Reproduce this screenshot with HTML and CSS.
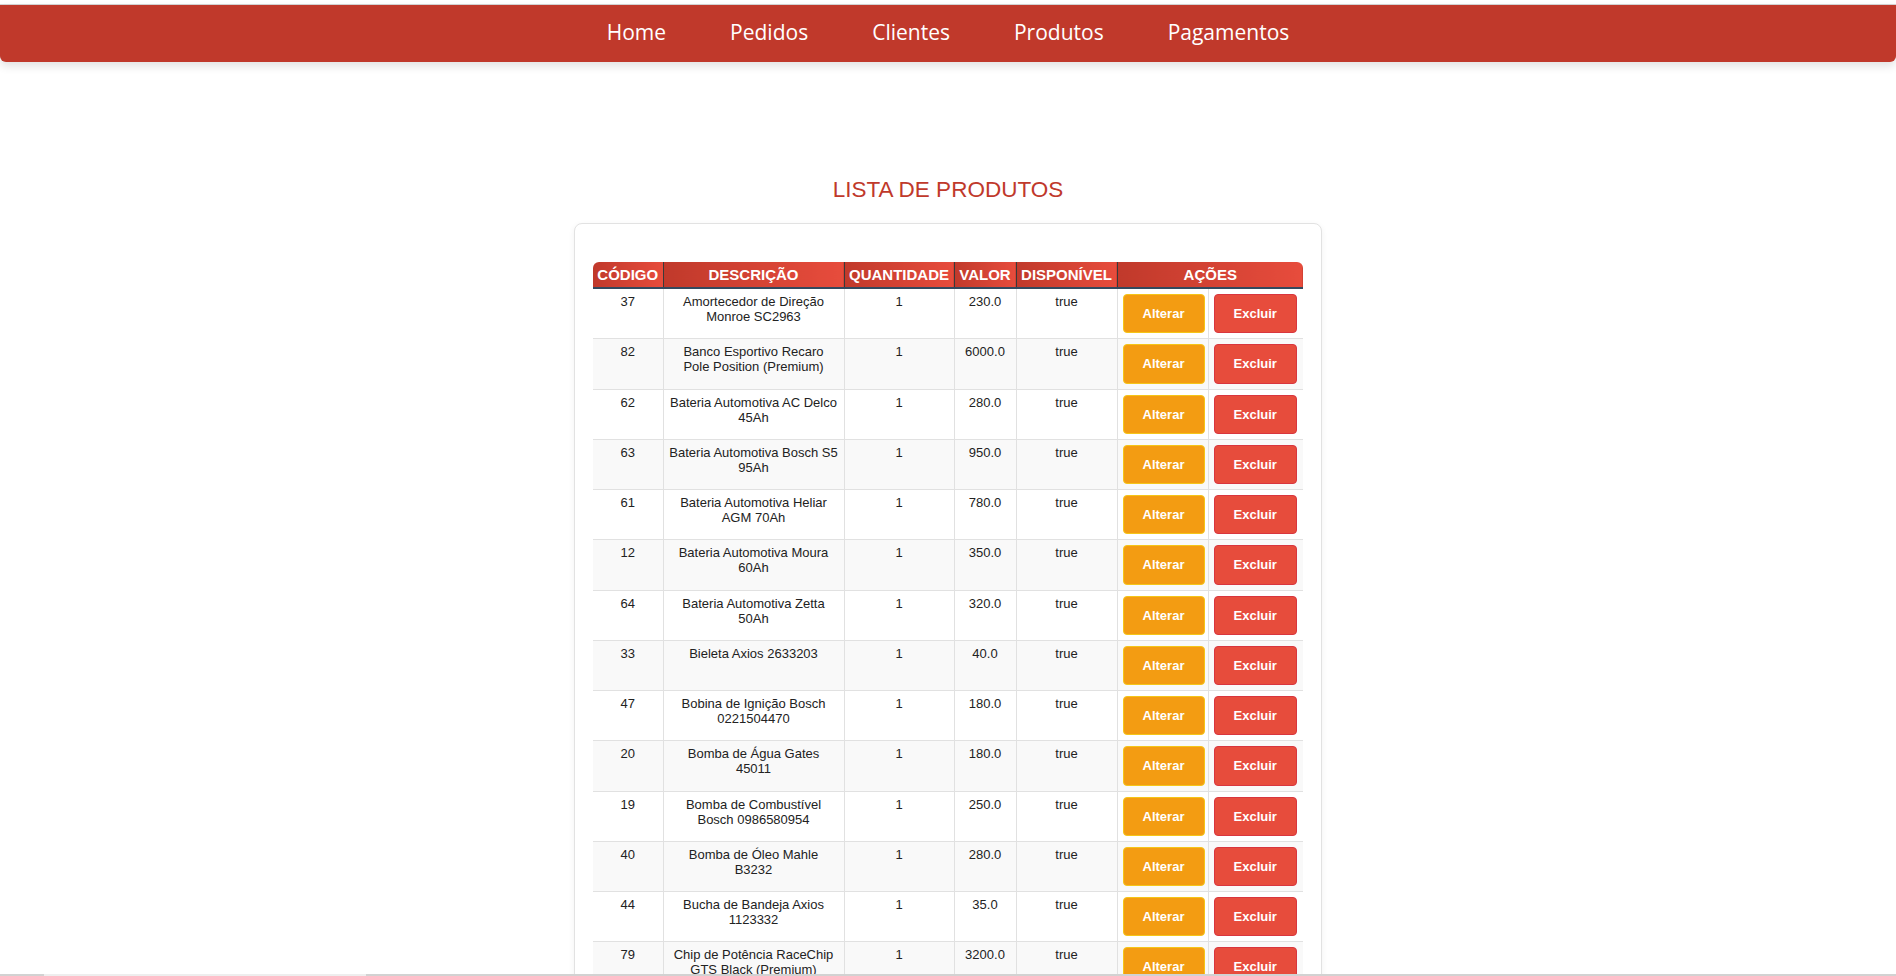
FILE: index.html
```html
<!DOCTYPE html>
<html lang="pt-BR">
<head>
<meta charset="utf-8">
<title>Lista de Produtos</title>
<link rel="stylesheet" href="styles.css">
</head>
<body>
<nav class="navbar">
  <a class="nav-link" href="#">Home</a>
  <a class="nav-link" href="#">Pedidos</a>
  <a class="nav-link" href="#">Clientes</a>
  <a class="nav-link" href="#">Produtos</a>
  <a class="nav-link" href="#">Pagamentos</a>
</nav>
<main class="page">
  <h2 class="title">LISTA DE PRODUTOS</h2>
  <section class="card">
    <table class="products">
      <colgroup>
        <col class="c-code"><col class="c-desc"><col class="c-qty"><col class="c-val"><col class="c-disp"><col class="c-act1"><col class="c-act2">
      </colgroup>
      <thead>
        <tr><th>CÓDIGO</th><th>DESCRIÇÃO</th><th>QUANTIDADE</th><th>VALOR</th><th>DISPONÍVEL</th><th colspan="2">AÇÕES</th></tr>
      </thead>
      <tbody>
        <tr><td>37</td><td>Amortecedor de Direção Monroe SC2963</td><td>1</td><td>230.0</td><td>true</td><td><button class="btn btn-edit">Alterar</button></td><td><button class="btn btn-del">Excluir</button></td></tr>
        <tr><td>82</td><td>Banco Esportivo Recaro Pole Position (Premium)</td><td>1</td><td>6000.0</td><td>true</td><td><button class="btn btn-edit">Alterar</button></td><td><button class="btn btn-del">Excluir</button></td></tr>
        <tr><td>62</td><td>Bateria Automotiva AC Delco 45Ah</td><td>1</td><td>280.0</td><td>true</td><td><button class="btn btn-edit">Alterar</button></td><td><button class="btn btn-del">Excluir</button></td></tr>
        <tr><td>63</td><td>Bateria Automotiva Bosch S5 95Ah</td><td>1</td><td>950.0</td><td>true</td><td><button class="btn btn-edit">Alterar</button></td><td><button class="btn btn-del">Excluir</button></td></tr>
        <tr><td>61</td><td>Bateria Automotiva Heliar AGM 70Ah</td><td>1</td><td>780.0</td><td>true</td><td><button class="btn btn-edit">Alterar</button></td><td><button class="btn btn-del">Excluir</button></td></tr>
        <tr><td>12</td><td>Bateria Automotiva Moura 60Ah</td><td>1</td><td>350.0</td><td>true</td><td><button class="btn btn-edit">Alterar</button></td><td><button class="btn btn-del">Excluir</button></td></tr>
        <tr><td>64</td><td>Bateria Automotiva Zetta 50Ah</td><td>1</td><td>320.0</td><td>true</td><td><button class="btn btn-edit">Alterar</button></td><td><button class="btn btn-del">Excluir</button></td></tr>
        <tr><td>33</td><td>Bieleta Axios 2633203</td><td>1</td><td>40.0</td><td>true</td><td><button class="btn btn-edit">Alterar</button></td><td><button class="btn btn-del">Excluir</button></td></tr>
        <tr><td>47</td><td>Bobina de Ignição Bosch 0221504470</td><td>1</td><td>180.0</td><td>true</td><td><button class="btn btn-edit">Alterar</button></td><td><button class="btn btn-del">Excluir</button></td></tr>
        <tr><td>20</td><td>Bomba de Água Gates 45011</td><td>1</td><td>180.0</td><td>true</td><td><button class="btn btn-edit">Alterar</button></td><td><button class="btn btn-del">Excluir</button></td></tr>
        <tr><td>19</td><td>Bomba de Combustível Bosch 0986580954</td><td>1</td><td>250.0</td><td>true</td><td><button class="btn btn-edit">Alterar</button></td><td><button class="btn btn-del">Excluir</button></td></tr>
        <tr><td>40</td><td>Bomba de Óleo Mahle B3232</td><td>1</td><td>280.0</td><td>true</td><td><button class="btn btn-edit">Alterar</button></td><td><button class="btn btn-del">Excluir</button></td></tr>
        <tr><td>44</td><td>Bucha de Bandeja Axios 1123332</td><td>1</td><td>35.0</td><td>true</td><td><button class="btn btn-edit">Alterar</button></td><td><button class="btn btn-del">Excluir</button></td></tr>
        <tr><td>79</td><td>Chip de Potência RaceChip GTS Black (Premium)</td><td>1</td><td>3200.0</td><td>true</td><td><button class="btn btn-edit">Alterar</button></td><td><button class="btn btn-del">Excluir</button></td></tr>
        <tr><td>25</td><td>Correia Dentada Gates 5499XS</td><td>1</td><td>120.0</td><td>true</td><td><button class="btn btn-edit">Alterar</button></td><td><button class="btn btn-del">Excluir</button></td></tr>
        <tr><td>15</td><td>Disco de Freio Fremax BD5602</td><td>1</td><td>210.0</td><td>true</td><td><button class="btn btn-edit">Alterar</button></td><td><button class="btn btn-del">Excluir</button></td></tr>
      </tbody>
    </table>
  </section>
</main>
<div class="hscroll"><div class="hscroll-thumb"></div></div>
</body>
</html>
```

FILE: styles.css
```css
html, body {
  margin: 0;
  padding: 0;
  background: #ffffff;
}

body {
  font-family: "Liberation Sans", Arial, sans-serif;
  color: #333333;
}

::-webkit-scrollbar {
  display: none;
}

.navbar {
  margin-top: 5px;
  height: 57px;
  background: #c0392b;
  border-radius: 0 0 6px 6px;
  box-shadow: 0 4px 10px rgba(0, 0, 0, 0.12), 0 -1px 0 #d6d6d6;
  display: flex;
  justify-content: center;
  align-items: center;
  gap: 64px;
}

.nav-link {
  color: #ffffff;
  text-decoration: none;
  font-family: "Open Sans", "Noto Sans", sans-serif;
  font-size: 21px;
  line-height: 1;
  margin-top: -2px;
}

.page {
  padding-bottom: 40px;
}

.title {
  margin: 115px 0 20px;
  text-align: center;
  font-family: "Liberation Sans", Arial, sans-serif;
  font-size: 22.5px;
  font-weight: normal;
  color: #c0392b;
}

.card {
  width: 748px;
  box-sizing: border-box;
  margin: 0 auto;
  padding: 38px 18px 18px;
  background: #ffffff;
  border: 1px solid #e2e2e2;
  border-radius: 8px;
  box-shadow: 0 2px 6px rgba(0, 0, 0, 0.06);
}

.products {
  width: 100%;
  border-collapse: collapse;
  table-layout: fixed;
  font-size: 13px;
}

.c-code { width: 70px; }
.c-desc { width: 181px; }
.c-qty { width: 110px; }
.c-val { width: 62px; }
.c-disp { width: 101px; }
.c-act1 { width: 91px; }
.c-act2 { width: 95px; }

.products th {
  background: linear-gradient(to right, #c0392b, #e74c3c);
  color: #ffffff;
  font-size: 15px;
  font-weight: bold;
  line-height: 17px;
  padding: 4px 0;
  text-align: center;
  white-space: nowrap;
  border-left: 1px solid #3a3a3a;
  border-bottom: 2px solid #34495e;
}

.products th:first-child {
  border-left: none;
  border-top-left-radius: 6px;
}

.products th:last-child {
  border-top-right-radius: 6px;
}

.products td {
  padding: 5px;
  border: 1px solid #e1e1e1;
  text-align: center;
  vertical-align: top;
  line-height: 15px;
  color: #222222;
}

.products td:nth-child(2) {
  padding-left: 5.75px;
  padding-right: 5.75px;
}

.products td:first-child {
  border-left: none;
}

.products td:last-child {
  border-right: none;
}

.products tbody tr:nth-child(even) td {
  background: #f9f9f9;
}

.btn {
  display: block;
  box-sizing: border-box;
  height: 39.25px;
  padding: 0 19px;
  font-family: "Liberation Sans", Arial, sans-serif;
  font-size: 13px;
  font-weight: bold;
  color: #ffffff;
  border-radius: 4px;
  cursor: pointer;
}

.btn-edit {
  width: 82px;
  background: #f39c12;
  border: 1px solid #f5c518;
}

.btn-del {
  width: 83px;
  background: #e74c3c;
  border: 1px solid #d9363e;
}

.hscroll {
  position: fixed;
  left: 0;
  right: 0;
  bottom: 0;
  height: 2px;
  background: #d2d2d2;
}

.hscroll-thumb {
  margin-left: 44px;
  width: 322px;
  height: 2px;
  background: #eeeeee;
}
```
